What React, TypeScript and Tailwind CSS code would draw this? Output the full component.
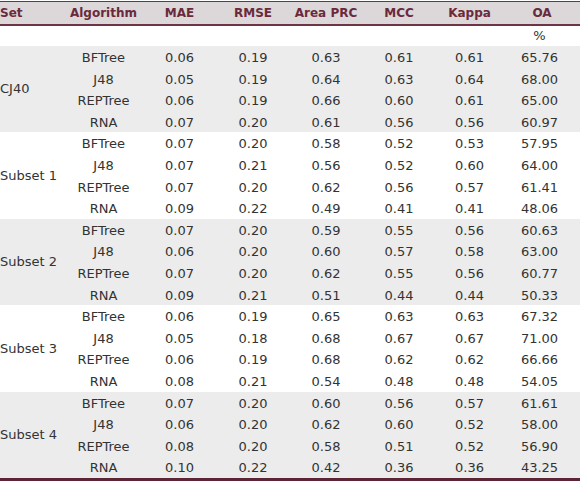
const groups = [
  {
    set: "CJ40",
    rows: [
      ["BFTree", "0.06", "0.19", "0.63", "0.61", "0.61", "65.76"],
      ["J48", "0.05", "0.19", "0.64", "0.63", "0.64", "68.00"],
      ["REPTree", "0.06", "0.19", "0.66", "0.60", "0.61", "65.00"],
      ["RNA", "0.07", "0.20", "0.61", "0.56", "0.56", "60.97"],
    ],
  },
  {
    set: "Subset 1",
    rows: [
      ["BFTree", "0.07", "0.20", "0.58", "0.52", "0.53", "57.95"],
      ["J48", "0.07", "0.21", "0.56", "0.52", "0.60", "64.00"],
      ["REPTree", "0.07", "0.20", "0.62", "0.56", "0.57", "61.41"],
      ["RNA", "0.09", "0.22", "0.49", "0.41", "0.41", "48.06"],
    ],
  },
  {
    set: "Subset 2",
    rows: [
      ["BFTree", "0.07", "0.20", "0.59", "0.55", "0.56", "60.63"],
      ["J48", "0.06", "0.20", "0.60", "0.57", "0.58", "63.00"],
      ["REPTree", "0.07", "0.20", "0.62", "0.55", "0.56", "60.77"],
      ["RNA", "0.09", "0.21", "0.51", "0.44", "0.44", "50.33"],
    ],
  },
  {
    set: "Subset 3",
    rows: [
      ["BFTree", "0.06", "0.19", "0.65", "0.63", "0.63", "67.32"],
      ["J48", "0.05", "0.18", "0.68", "0.67", "0.67", "71.00"],
      ["REPTree", "0.06", "0.19", "0.68", "0.62", "0.62", "66.66"],
      ["RNA", "0.08", "0.21", "0.54", "0.48", "0.48", "54.05"],
    ],
  },
  {
    set: "Subset 4",
    rows: [
      ["BFTree", "0.07", "0.20", "0.60", "0.56", "0.57", "61.61"],
      ["J48", "0.06", "0.20", "0.62", "0.60", "0.52", "58.00"],
      ["REPTree", "0.08", "0.20", "0.58", "0.51", "0.52", "56.90"],
      ["RNA", "0.10", "0.22", "0.42", "0.36", "0.36", "43.25"],
    ],
  },
];

const headers = ["Algorithm", "MAE", "RMSE", "Area PRC", "MCC", "Kappa", "OA"];

// column template shared by header, unit row and data rows
const cols = "grid grid-cols-[65px_77px_75px_72px_74px_72px_69px_1fr]";

export default function App() {
  return (
    <div className="w-[580px] h-[481px] bg-white pt-px font-['DejaVu_Sans',sans-serif] text-[13px] text-[#333]">
      {/* Header */}
      <div className={`${cols} h-[25px] items-center bg-[#dcd7d8] border-t border-b-2 border-[#6e3446] text-[12px] font-bold text-[#6b2a3c]`}>
        <div>Set</div>
        {headers.map((h) => (
          <div key={h} className="text-center">
            {h}
          </div>
        ))}
      </div>

      {/* Units */}
      <div className={`${cols} h-[20px] items-center`}>
        <div className="col-start-8 text-center pr-[5px]">%</div>
      </div>

      {groups.map((g, gi) => (
        <div
          key={g.set}
          className={`${cols} ${gi % 2 === 0 ? "bg-[#ececec]" : "bg-white"}`}
        >
          <div className="row-span-4 flex items-center">{g.set}</div>
          {g.rows.map((r) =>
            r.map((v, i) => (
              <div
                key={r[0] + i}
                className={`h-[21.6px] flex items-center justify-center pt-[2px] ${i === 6 ? "pr-[5px]" : ""}`}
              >
                {v}
              </div>
            ))
          )}
        </div>
      ))}

      <div className="h-[3px] bg-[#5b2535]" />
    </div>
  );
}
